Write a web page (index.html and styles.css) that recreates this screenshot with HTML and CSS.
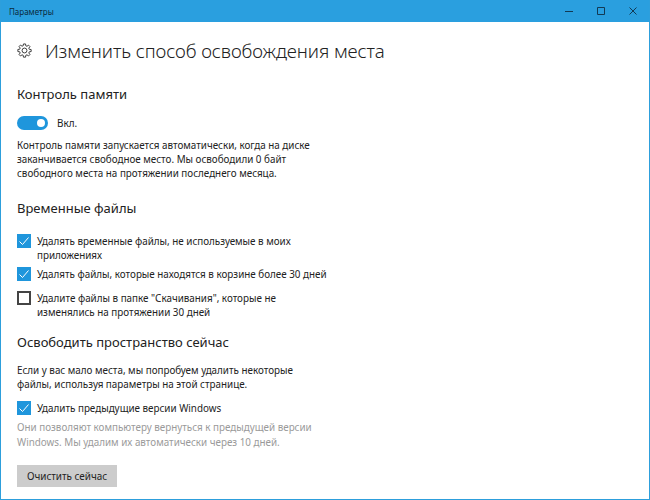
FILE: index.html
```html
<!DOCTYPE html>
<html lang="ru">
<head>
<meta charset="utf-8">
<title>Параметры</title>
<link rel="stylesheet" href="styles.css">
</head>
<body>
<div class="window">
  <header class="titlebar">
    <span class="title">Параметры</span>
    <div class="controls">
      <svg class="ctl" viewBox="0 0 8 8"><path d="M0 4.5H8" /></svg>
      <svg class="ctl" viewBox="0 0 8 8"><path d="M.5 .5H7.5V7.5H.5Z" /></svg>
      <svg class="ctl" viewBox="0 0 8 8"><path d="M.5 .5L7.5 7.5M7.5 .5L.5 7.5" /></svg>
    </div>
  </header>
  <main class="content">
    <div class="heading">
      <svg class="gear" viewBox="0 0 16 16">
        <circle cx="8" cy="8" r="2.6"/>
        <path d="M6.9 1h2.2l.3 2 1.2.5 1.7-1.2 1.5 1.5-1.2 1.7.5 1.2 2 .3v2.1l-2 .3-.5 1.2 1.2 1.7-1.5 1.5-1.7-1.2-1.2.5-.3 2H6.9l-.3-2-1.2-.5-1.7 1.2-1.5-1.5 1.2-1.7-.5-1.2-2-.3V6.9l2-.3.5-1.2-1.2-1.7 1.5-1.5 1.7 1.2 1.2-.5z"/>
      </svg>
      <h1>Изменить способ освобождения места</h1>
    </div>

    <h2 class="first">Контроль памяти</h2>
    <div class="toggle-row">
      <span class="toggle"><span class="knob"></span></span>
      <span class="toggle-label">Вкл.</span>
    </div>
    <p class="text">Контроль памяти запускается автоматически, когда на диске<br>заканчивается свободное место. Мы освободили 0 байт<br>свободного места на протяжении последнего месяца.</p>

    <h2 class="temp">Временные файлы</h2>
    <div class="check first-check">
      <span class="box on"><svg viewBox="0 0 14 14"><path d="M2.5 7.5L5.5 10.5L11.5 3.5"/></svg></span>
      <span class="label">Удалять временные файлы, не используемые в моих<br>приложениях</span>
    </div>
    <div class="check second-check">
      <span class="box on"><svg viewBox="0 0 14 14"><path d="M2.5 7.5L5.5 10.5L11.5 3.5"/></svg></span>
      <span class="label">Удалять файлы, которые находятся в корзине более 30 дней</span>
    </div>
    <div class="check">
      <span class="box"></span>
      <span class="label">Удалите файлы в папке "Скачивания", которые не<br>изменялись на протяжении 30 дней</span>
    </div>

    <h2 class="free">Освободить пространство сейчас</h2>
    <p class="text now">Если у вас мало места, мы попробуем удалить некоторые<br>файлы, используя параметры на этой странице.</p>
    <div class="check">
      <span class="box on"><svg viewBox="0 0 14 14"><path d="M2.5 7.5L5.5 10.5L11.5 3.5"/></svg></span>
      <span class="label">Удалить предыдущие версии Windows</span>
    </div>
    <p class="text muted">Они позволяют компьютеру вернуться к предыдущей версии<br>Windows. Мы удалим их автоматически через 10 дней.</p>
    <button class="btn">Очистить сейчас</button>
  </main>
</div>
</body>
</html>
```

FILE: styles.css
```css
* { box-sizing: border-box; }
html, body { margin: 0; padding: 0; }
body {
  width: 650px;
  height: 500px;
  overflow: hidden;
  font-family: "Noto Sans", "Open Sans", sans-serif;
  color: #1a1a1a;
  background: #fff;
}
.window {
  width: 650px;
  height: 500px;
  border: 1px solid #2d9fdc;
  border-top: 0;
  display: flex;
  flex-direction: column;
  overflow: hidden;
}
.titlebar {
  height: 22px;
  flex: none;
  background: #2a9fdf;
  display: flex;
  align-items: center;
  justify-content: space-between;
  padding-left: 8px;
}
.title { font-size: 8px; color: #0b2b3d; }
.controls { display: flex; }
.ctl {
  width: 8px;
  height: 8px;
  margin: 0 12px;
  fill: none;
  stroke: #123a55;
  stroke-width: 1;
}
.content {
  flex: 1;
  padding: 0 0 0 16px;
}
.heading { display: flex; align-items: center; height: 30px; margin-top: 14px; }
.gear { width: 15px; height: 15px; fill: none; stroke: #333; stroke-width: 1; margin-top: -1px; }
h1 {
  margin: 0 0 0 13px;
  font-size: 18.7px;
  font-weight: 300;
  line-height: 30px;
  letter-spacing: -0.1px;
  color: #222;
}
h2 {
  margin: 0;
  font-size: 13px;
  font-weight: 400;
  line-height: 20px;
  color: #222;
}
h2.first { margin-top: 18px; }
h2.temp { margin-top: 18px; }
h2.free { margin-top: 13px; }
.toggle-row { display: flex; align-items: center; margin-top: 12px; height: 14px; }
.toggle {
  width: 31px;
  height: 14px;
  border-radius: 7px;
  background: #1f96dc;
  display: flex;
  align-items: center;
  justify-content: flex-end;
  padding-right: 3px;
}
.knob { width: 8px; height: 8px; border-radius: 50%; background: #fff; }
.toggle-label { font-size: 9.9px; margin-left: 9px; }
.text {
  margin: 8px 0 0;
  font-size: 9.85px;
  line-height: 14px;
  color: #222;
}
.now { margin-top: 11px; }
.muted { color: #9a9a9a; margin-top: 5px; line-height: 14.5px; }
.check { display: flex; align-items: flex-start; margin-top: 10px; }
.first-check { margin-top: 16px; }
.second-check { margin-top: 5px; }
.box {
  flex: none;
  width: 14px;
  height: 14px;
  border: 2px solid #444;
  display: block;
}
.box.on { background: #1f96dc; border: 0; }
.box svg { display: block; width: 14px; height: 14px; fill: none; stroke: #fff; stroke-width: 1; }
.label { margin-left: 6px; font-size: 9.85px; line-height: 14px; color: #222; }
.btn {
  display: block;
  width: 100px;
  height: 22px;
  margin-top: 16px;
  border: 0;
  padding: 0;
  background: #ccc;
  font-family: inherit;
  font-size: 9.9px;
  color: #222;
}
```
